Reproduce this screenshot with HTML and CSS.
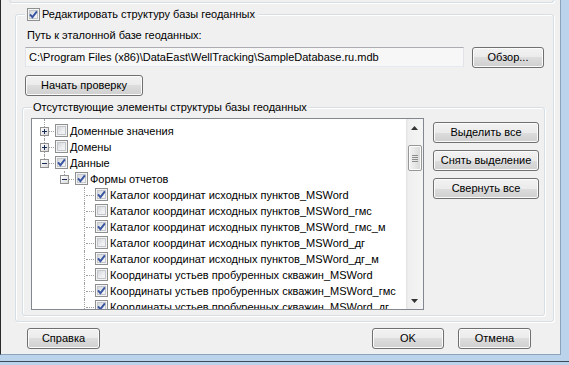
FILE: index.html
```html
<!DOCTYPE html>
<html>

<head>
    <meta charset="UTF-8">
    <title>Структура базы геоданных</title>
    <link rel="stylesheet" href="styles.css">
</head>

<body>

    <div id="window">
        <div id="client">
            <div class="prev-panel"></div>

            <fieldset class="group" id="edit-group">
                <legend class="group-title">
                    <span class="check on"><svg viewBox="0 0 11 11"><path d="M2 5.4 L4.4 8.2 L8.9 2.3" /></svg></span>
                    <span>Редактировать структуру базы геоданных</span>
                </legend>

                <p class="label">Путь к эталонной базе геоданных:</p>
                <div class="path-row">
                    <div class="textbox">C:\Program Files (x86)\DataEast\WellTracking\SampleDatabase.ru.mdb</div>
                    <button class="btn" id="browse">Обзор...</button>
                </div>
                <button class="btn" id="start">Начать проверку</button>

                <fieldset class="group" id="missing-group">
                    <legend class="group-title">Отсутствующие элементы структуры базы геоданных</legend>
                    <div class="missing-body">
                        <div class="tree">
                            <ul class="nodes">
                                <li class="first">
                                    <span class="tog v"><i class="exp plus"></i></span>
                                    <span class="check"></span>
                                    <span class="text">Доменные значения</span>
                                </li>
                                <li>
                                    <span class="tog v"><i class="exp plus"></i></span>
                                    <span class="check"></span>
                                    <span class="text">Домены</span>
                                </li>
                                <li>
                                    <span class="tog last"><i class="exp"></i></span>
                                    <span class="check on"><svg viewBox="0 0 11 11"><path d="M2 5.4 L4.4 8.2 L8.9 2.3" /></svg></span>
                                    <span class="text">Данные</span>
                                </li>
                                <li>
                                    <span class="indent"></span>
                                    <span class="tog last"><i class="exp"></i></span>
                                    <span class="check on"><svg viewBox="0 0 11 11"><path d="M2 5.4 L4.4 8.2 L8.9 2.3" /></svg></span>
                                    <span class="text">Формы отчетов</span>
                                </li>
                                <li>
                                    <span class="indent"></span><span class="indent"></span>
                                    <span class="tog v"></span>
                                    <span class="check on"><svg viewBox="0 0 11 11"><path d="M2 5.4 L4.4 8.2 L8.9 2.3" /></svg></span>
                                    <span class="text">Каталог координат исходных пунктов_MSWord</span>
                                </li>
                                <li>
                                    <span class="indent"></span><span class="indent"></span>
                                    <span class="tog v"></span>
                                    <span class="check"></span>
                                    <span class="text">Каталог координат исходных пунктов_MSWord_гмс</span>
                                </li>
                                <li>
                                    <span class="indent"></span><span class="indent"></span>
                                    <span class="tog v"></span>
                                    <span class="check on"><svg viewBox="0 0 11 11"><path d="M2 5.4 L4.4 8.2 L8.9 2.3" /></svg></span>
                                    <span class="text">Каталог координат исходных пунктов_MSWord_гмс_м</span>
                                </li>
                                <li>
                                    <span class="indent"></span><span class="indent"></span>
                                    <span class="tog v"></span>
                                    <span class="check"></span>
                                    <span class="text">Каталог координат исходных пунктов_MSWord_дг</span>
                                </li>
                                <li>
                                    <span class="indent"></span><span class="indent"></span>
                                    <span class="tog v"></span>
                                    <span class="check on"><svg viewBox="0 0 11 11"><path d="M2 5.4 L4.4 8.2 L8.9 2.3" /></svg></span>
                                    <span class="text">Каталог координат исходных пунктов_MSWord_дг_м</span>
                                </li>
                                <li>
                                    <span class="indent"></span><span class="indent"></span>
                                    <span class="tog v"></span>
                                    <span class="check"></span>
                                    <span class="text">Координаты устьев пробуренных скважин_MSWord</span>
                                </li>
                                <li>
                                    <span class="indent"></span><span class="indent"></span>
                                    <span class="tog v"></span>
                                    <span class="check on"><svg viewBox="0 0 11 11"><path d="M2 5.4 L4.4 8.2 L8.9 2.3" /></svg></span>
                                    <span class="text">Координаты устьев пробуренных скважин_MSWord_гмс</span>
                                </li>
                                <li>
                                    <span class="indent"></span><span class="indent"></span>
                                    <span class="tog v"></span>
                                    <span class="check on"><svg viewBox="0 0 11 11"><path d="M2 5.4 L4.4 8.2 L8.9 2.3" /></svg></span>
                                    <span class="text">Координаты устьев пробуренных скважин_MSWord_дг</span>
                                </li>
                            </ul>

                            <div class="vscroll">
                                <div class="arrow"><svg width="7" height="4" viewBox="0 0 7 4"><polygon points="0,4 3.5,0 7,4" /></svg></div>
                                <div class="track">
                                    <div class="thumb">
                                        <svg width="6" height="7" viewBox="0 0 6 7">
                                            <rect x="0" y="0" width="6" height="1" />
                                            <rect x="0" y="2" width="6" height="1" />
                                            <rect x="0" y="4" width="6" height="1" />
                                            <rect x="0" y="6" width="6" height="1" />
                                        </svg>
                                    </div>
                                </div>
                                <div class="arrow"><svg width="7" height="4" viewBox="0 0 7 4"><polygon points="0,0 7,0 3.5,4" /></svg></div>
                            </div>
                        </div>

                        <div class="side-buttons">
                            <button class="btn">Выделить все</button>
                            <button class="btn">Снять выделение</button>
                            <button class="btn">Свернуть все</button>
                        </div>
                    </div>
                </fieldset>
            </fieldset>

            <div class="footer">
                <button class="btn" id="help">Справка</button>
                <button class="btn" id="ok">OK</button>
                <button class="btn" id="cancel">Отмена</button>
            </div>
        </div>
        <div class="frame-bottom"></div>
    </div>

</body>

</html>
```

FILE: styles.css
```css
* {
    margin: 0;
    padding: 0;
    box-sizing: border-box;
}

body {
    width: 569px;
    height: 365px;
    overflow: hidden;
    background: #bcd3ec;
    font: 11px/13px "Liberation Sans", Arial, sans-serif;
    color: #000;
}

#window {
    width: 561px;
}

#client {
    height: 355px;
    background: #f0f0f0;
    border-left: 1px solid #2a2a2a;
    border-right: 1px solid #8da2bb;
    border-bottom: 1px solid #8da2bb;
}

.frame-bottom {
    height: 7px;
    width: 569px;
    border-bottom: 1px solid #3c4a5c;
}

/* top panel that is cut off */
.prev-panel {
    width: 545px;
    height: 3px;
    margin-left: 8px;
    border: 1px solid #d5dfe5;
    border-top: none;
    border-radius: 0 0 3px 3px;
    box-shadow: 1px 1px 0 #fff;
}

/* group boxes */
.group {
    min-width: 0;
    border: 1px solid #d5dfe5;
    border-radius: 3px;
    box-shadow: inset 1px 1px 0 #fff, 1px 1px 0 #fff;
}

.group-title {
    background: #f0f0f0;
    line-height: 13px;
}

#edit-group {
    width: 539px;
    margin: 4px 0 0 14px;
    padding: 0 9px 0 9px;
}

#edit-group > .group-title {
    display: flex;
    align-items: center;
    height: 14px;
    margin-left: 0;
    padding: 0 3px 0 2px;
}

#edit-group > .group-title .check {
    margin-right: 2px;
}

.label {
    margin-top: 8px;
    padding-left: 2px;
}

.path-row {
    display: flex;
    align-items: flex-start;
    margin-top: 5px;
}

.textbox {
    width: 439px;
    height: 20px;
    padding: 0 3px;
    line-height: 18px;
    white-space: nowrap;
    overflow: hidden;
    background: #f7f7f7;
    border: 1px solid #dbdfe6;
    border-top-color: #abadb3;
    border-left-color: #e2e3ea;
    border-right-color: #e2e3ea;
    border-bottom-color: #e3e9ef;
}

/* buttons */
.btn {
    display: block;
    height: 21px;
    font: inherit;
    color: #000;
    border: 1px solid #707070;
    border-radius: 3px;
    background: linear-gradient(#f2f2f2 0%, #ebebeb 50%, #dddddd 50%, #cfcfcf 100%);
    box-shadow: inset 0 0 0 1px #fbfbfb;
}

#browse {
    width: 72px;
    margin-left: 8px;
}

#start {
    width: 118px;
    margin-top: 7px;
}

#missing-group {
    width: 523px;
    margin: 5px 0 5px -3px;
    padding: 0 5px 5px 8px;
}

#missing-group > .group-title {
    margin-left: 1px;
    padding: 0 1px 0 1px;
}

.missing-body {
    display: flex;
    align-items: flex-start;
    padding-top: 4px;
}

/* tree view */
.tree {
    display: flex;
    width: 393px;
    height: 192px;
    border: 1px solid #828790;
    background: #fff;
}

.nodes {
    flex: 1;
    list-style: none;
    overflow: hidden;
    padding: 4px 0 0 3px;
}

.nodes li {
    display: flex;
    align-items: flex-start;
    height: 16px;
    white-space: nowrap;
}

.indent {
    flex: none;
    width: 20px;
    height: 16px;
}

.tog {
    flex: none;
    position: relative;
    width: 20px;
    height: 16px;
}

.tog::before {
    content: "";
    position: absolute;
    left: 9px;
    top: 0;
    bottom: 0;
    border-left: 1px dotted #a0a0a0;
}

.tog.last::before {
    bottom: 8px;
}

.nodes li.first .tog::before {
    top: -4px;
}

.tog::after {
    content: "";
    position: absolute;
    left: 11px;
    right: 1px;
    top: 8px;
    border-top: 1px dotted #a0a0a0;
}

.exp {
    position: absolute;
    z-index: 1;
    left: 5px;
    top: 4px;
    width: 9px;
    height: 9px;
    border: 1px solid #919191;
    background: linear-gradient(135deg, #ffffff, #d9d9d9);
}

.exp::before {
    content: "";
    position: absolute;
    left: 1px;
    top: 3px;
    width: 5px;
    height: 1px;
    background: #1a2b55;
}

.exp.plus::after {
    content: "";
    position: absolute;
    left: 3px;
    top: 1px;
    width: 1px;
    height: 5px;
    background: #1a2b55;
}

.text {
    margin-left: 2px;
    line-height: 16px;
}

/* check boxes */
.check {
    flex: none;
    display: block;
    width: 13px;
    height: 13px;
    margin-top: 1px;
    border: 1px solid #8e8f8f;
    background: linear-gradient(135deg, #c9ccd1, #eef0f2 60%, #f8f8f9);
    box-shadow: inset 0 0 0 1px #f4f4f4, inset 0 0 0 2px #c3c6cb;
}

.check svg {
    display: block;
    width: 11px;
    height: 11px;
}

.check path {
    fill: none;
    stroke: #3a55a0;
    stroke-width: 1.9;
}

/* scroll bar */
.vscroll {
    flex: none;
    display: flex;
    flex-direction: column;
    width: 17px;
    background: linear-gradient(90deg, #e3e3e3, #efefef 15%, #f5f5f5);
}

.arrow {
    display: flex;
    align-items: center;
    justify-content: center;
    height: 17px;
}

.arrow polygon {
    fill: #333;
}

.track {
    flex: 1;
}

.thumb {
    display: flex;
    align-items: center;
    justify-content: center;
    width: 14px;
    height: 26px;
    margin: 9px 0 0 2px;
    border: 1px solid #979797;
    border-radius: 2px;
    background: linear-gradient(90deg, #f3f3f3, #e6e6e6 50%, #d8d8d8);
    box-shadow: inset 0 0 0 1px #fcfcfc;
}

.thumb rect {
    fill: #8d8d8d;
}

.side-buttons {
    display: flex;
    flex-direction: column;
    gap: 7px;
    width: 106px;
    margin: 4px 0 0 9px;
}

/* bottom buttons */
.footer {
    display: flex;
    padding: 6px 29px 0 26px;
}

#help {
    width: 73px;
}

#ok {
    width: 72px;
    margin-left: auto;
}

#cancel {
    width: 73px;
    margin-left: 14px;
}
```
